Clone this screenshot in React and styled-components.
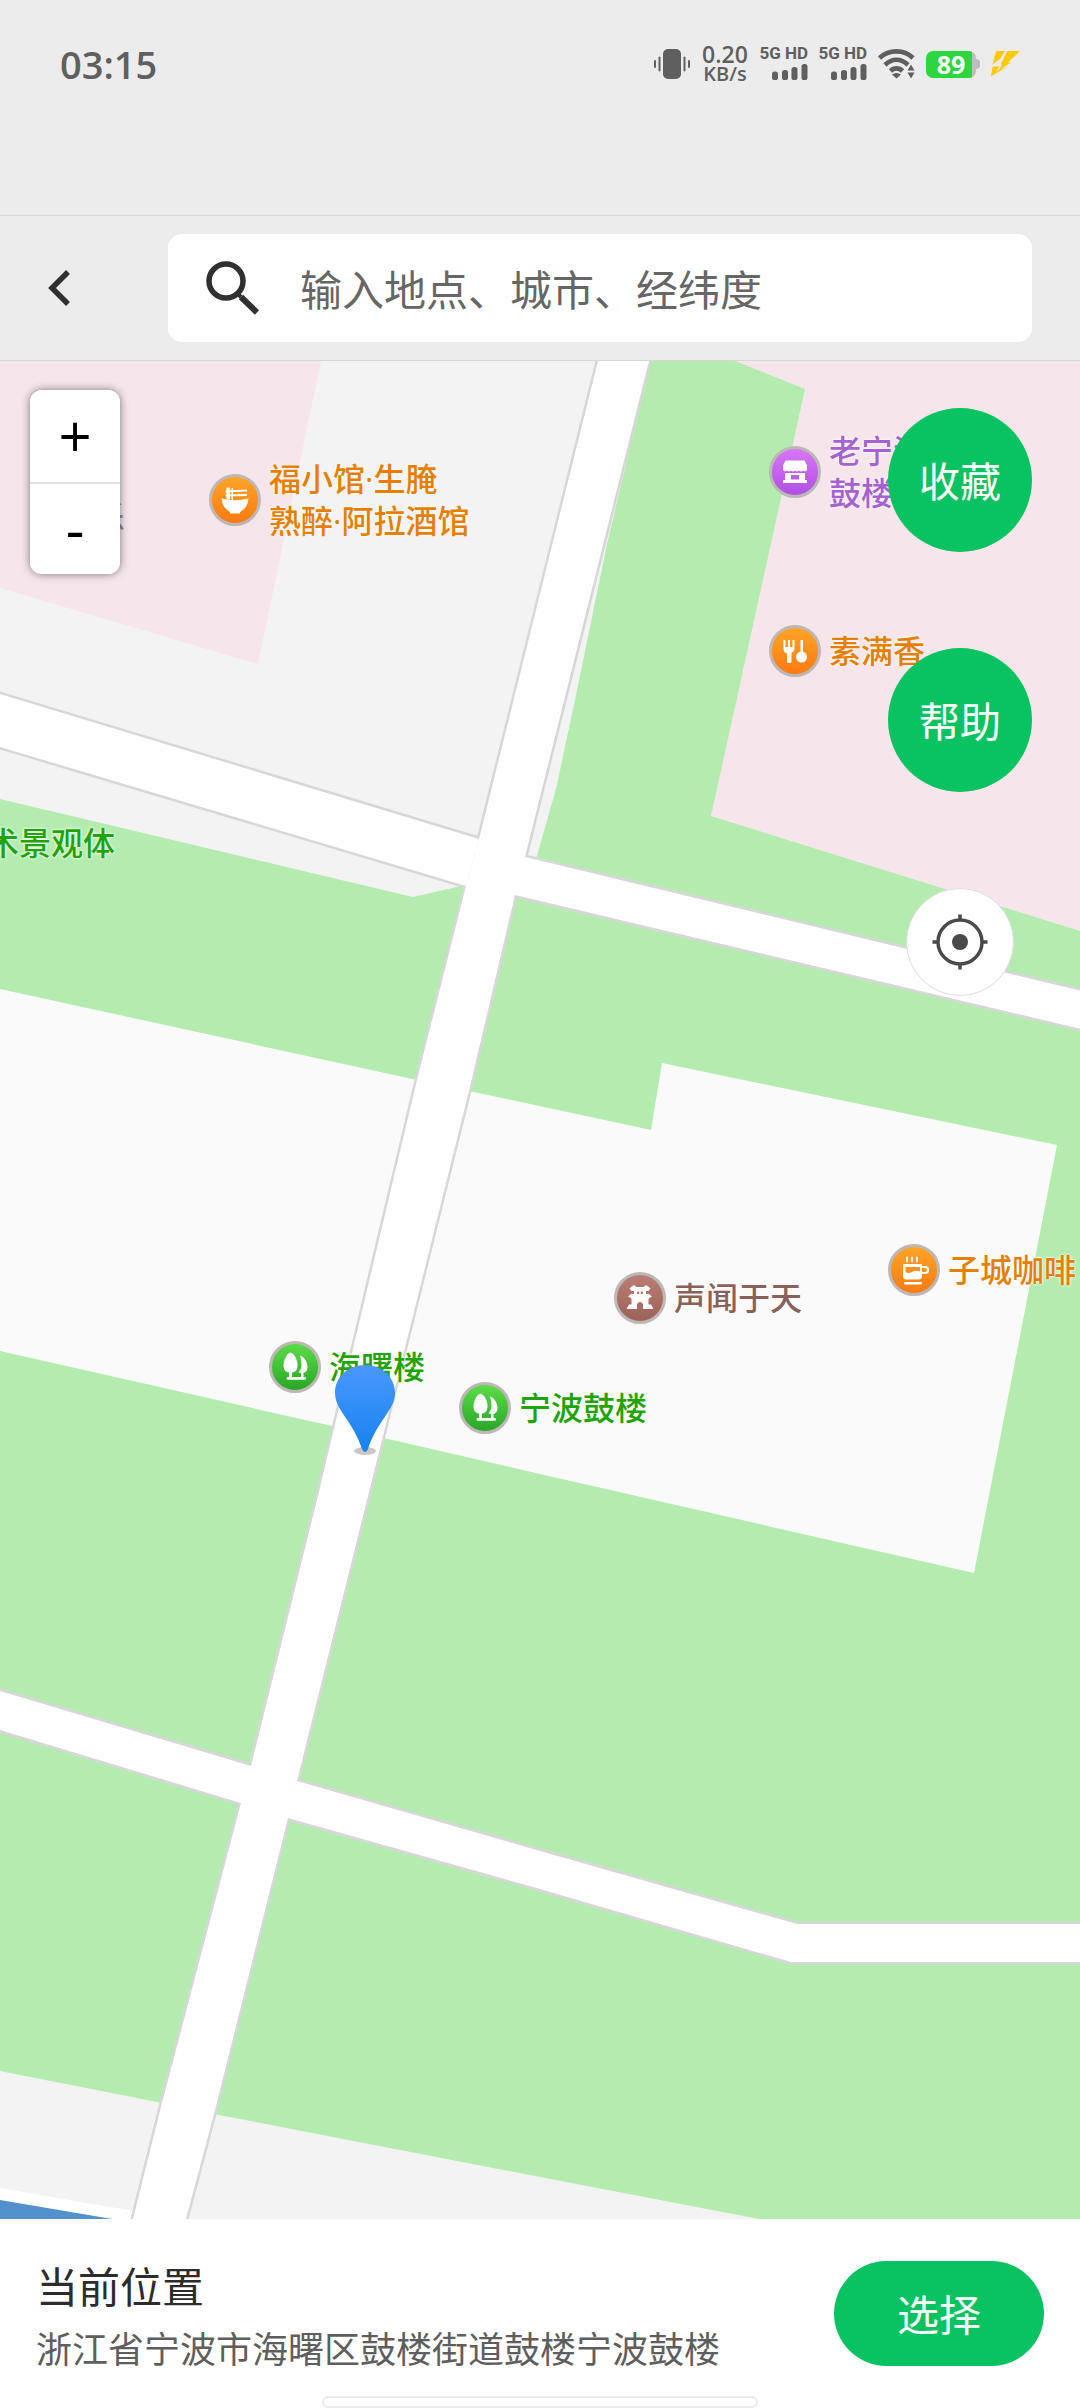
import React from "react";
import styled, { createGlobalStyle } from "styled-components";

const GlobalStyle = createGlobalStyle`
  *, *::before, *::after { box-sizing: border-box; }
  body {
    margin: 0;
    background: #ffffff;
    font-family: "Noto Sans CJK SC", "Noto Sans", sans-serif;
    color: #333333;
  }
  button, input { font: inherit; margin: 0; }
`;

const Screen = styled.div`
  display: flex;
  flex-direction: column;
  min-height: 100vh;
`;

/* ---------- Status bar ---------- */

const StatusBar = styled.header`
  height: 216px;
  background: #ececec;
  border-bottom: 1px solid #dcdcdc;
`;

const StatusRow = styled.div`
  display: flex;
  align-items: center;
  justify-content: space-between;
  height: 128px;
  padding: 0 60px;
  color: #5f5f5f;
`;

const Clock = styled.time`
  font: 600 38px/48px "Open Sans", "Noto Sans", sans-serif;
`;

const StatusIcons = styled.div`
  display: flex;
  align-items: center;
  gap: 11px;
`;

const NetSpeed = styled.div`
  display: flex;
  flex-direction: column;
  align-items: center;
  width: 48px;
  font: 600 23px/19px "Open Sans", "Noto Sans", sans-serif;
`;

const NetUnit = styled.span`
  font-size: 20px;
`;

const Signal = styled.div`
  display: flex;
  flex-direction: column;
  align-items: flex-end;
  gap: 4px;
  width: 48px;
  font: 700 17px/14px Roboto, sans-serif;
  white-space: nowrap;
`;

const Battery = styled.div`
  display: flex;
  align-items: center;
  width: 54px;
  &::after {
    content: "";
    width: 4px;
    height: 10px;
    border-radius: 0 4px 4px 0;
    background: #bdbdbd;
  }
`;

const BatteryCell = styled.div`
  flex: 1;
  height: 27px;
  border-radius: 7px;
  background: linear-gradient(to right, #2bd63f 92%, #bdbdbd 92%);
  color: #ffffff;
  font: 700 25px/27px "Open Sans", "Noto Sans", sans-serif;
  text-align: center;
`;

/* ---------- Search bar ---------- */

const NavBar = styled.nav`
  display: flex;
  align-items: center;
  padding: 18px 48px 18px 0;
  background: #ececec;
  border-bottom: 1px solid #d6d6d6;
`;

const BackButton = styled.button`
  display: flex;
  align-items: center;
  width: 168px;
  height: 108px;
  padding: 0 0 0 48px;
  border: 0;
  background: none;
`;

const SearchBox = styled.label`
  display: flex;
  align-items: center;
  flex: 1;
  gap: 40px;
  height: 108px;
  padding: 0 36px;
  border-radius: 14px;
  background: #ffffff;
`;

const SearchInput = styled.input`
  flex: 1;
  min-width: 0;
  padding: 0;
  border: 0;
  outline: 0;
  background: none;
  font-size: 42px;
  line-height: 60px;
  color: #333333;
  &::placeholder { color: #666666; opacity: 1; }
`;

/* ---------- Map ---------- */

const MapArea = styled.main`
  position: relative;
  flex: 1;
  overflow: hidden;
  background: #f3f3f3;
`;

const MapCanvas = styled.svg`
  position: absolute;
  inset: 0;
  width: 100%;
  height: 100%;
`;

const Poi = styled.div`
  position: absolute;
  left: ${(p) => p.$x}px;
  top: ${(p) => p.$y}px;
  display: flex;
  align-items: center;
  gap: 8px;
  transform: translate(-26px, -50%);
  color: ${(p) => p.$color};
  font: 500 32px/42px "Open Sans", "Noto Sans CJK SC", sans-serif;
  white-space: pre;
  text-shadow: 0 0 2px #fff, 0 0 3px #fff;
`;

const PoiBadge = styled.span`
  display: flex;
  width: 52px;
  height: 52px;
  border: 3px solid #bdb8b6;
  border-radius: 50%;
  background: linear-gradient(${(p) => p.$from}, ${(p) => p.$to});
  svg { width: 46px; height: 46px; }
`;

const Pin = styled.svg`
  position: absolute;
  left: 335px;
  top: 1004px;
  width: 60px;
  height: 92px;
`;

const ZoomControl = styled.div`
  position: absolute;
  left: 30px;
  top: 29px;
  display: flex;
  flex-direction: column;
  width: 90px;
  border-radius: 12px;
  overflow: hidden;
  background: #ffffff;
  box-shadow: 0 0 9px rgba(0, 0, 0, 0.5);
`;

const ZoomButton = styled.button`
  height: 92px;
  padding: 0;
  border: 0;
  background: #ffffff;
  color: #000000;
  font: 500 58px/90px "Open Sans", "Noto Sans", sans-serif;
  & + & { border-top: 2px solid #e2e2e2; }
`;

const FloatingActions = styled.div`
  position: absolute;
  top: 47px;
  right: 48px;
  display: flex;
  flex-direction: column;
  align-items: center;
  gap: 96px;
`;

const RoundButton = styled.button`
  width: 144px;
  height: 144px;
  padding: 0 0 2px;
  border: 0;
  border-radius: 50%;
  background: #09c261;
  color: #ffffff;
  font-size: 41px;
  line-height: 60px;
`;

const LocateButton = styled.button`
  display: flex;
  align-items: center;
  justify-content: center;
  width: 108px;
  height: 108px;
  padding: 0;
  border: 1px solid #dddddd;
  border-radius: 50%;
  background: #ffffff;
`;

/* ---------- Bottom sheet ---------- */

const BottomSheet = styled.footer`
  display: flex;
  flex-direction: column;
  gap: 17px;
  padding-top: 36px;
  background: #ffffff;
`;

const SheetRow = styled.div`
  display: flex;
  align-items: flex-start;
  justify-content: space-between;
  padding: 0 36px;
`;

const Place = styled.section`
  display: flex;
  flex-direction: column;
`;

const PlaceTitle = styled.h1`
  margin: 0;
  font-size: 42px;
  line-height: 60px;
  font-weight: 400;
  color: #2c2c2c;
`;

const PlaceAddress = styled.p`
  margin: 0;
  font-size: 36px;
  line-height: 64px;
  color: #5e5e5e;
`;

const SelectButton = styled.button`
  width: 210px;
  height: 105px;
  margin-top: 6px;
  padding: 0 0 2px;
  border: 0;
  border-radius: 53px;
  background: #09c261;
  color: #ffffff;
  font-size: 42px;
  line-height: 60px;
`;

const HomeIndicator = styled.div`
  align-self: center;
  width: 436px;
  height: 12px;
  border: 2px solid #ebebeb;
  border-radius: 6px;
  background: #ffffff;
`;

/* ---------- Drawings ---------- */

const VibrateIcon = () => (
  <svg width="36" height="30" viewBox="0 0 36 30" fill="#5f5f5f" aria-hidden="true">
    <rect x="9" y="0" width="18" height="30" rx="5" />
    <rect x="4.5" y="7.5" width="2" height="15" rx="1" />
    <rect x="0" y="11" width="2" height="8" rx="1" />
    <rect x="29.5" y="7.5" width="2" height="15" rx="1" />
    <rect x="34" y="11" width="2" height="8" rx="1" />
  </svg>
);

const SignalBars = () => (
  <svg width="36" height="18" viewBox="0 0 36 18" fill="#5f5f5f" aria-hidden="true">
    <rect x="0" y="7.5" width="6" height="8.5" rx="2.6" />
    <rect x="10" y="6" width="6" height="10" rx="2.6" />
    <rect x="19.5" y="3" width="6" height="13" rx="2.6" />
    <rect x="29.5" y="0" width="6" height="16" rx="2.6" />
  </svg>
);

const WifiIcon = () => (
  <svg width="37" height="30" viewBox="0 0 37 30" fill="none" stroke="#5f5f5f" strokeWidth="4.6" aria-hidden="true">
    <path d="M1.5 9C11 .2 26 .2 35 9" />
    <path d="M7 16C14 9 23 9 30 16" />
    <path d="M12.500 22C16 18.500 21 18.500 24.500 22" />
    <path d="M14 25.500q4.500-3 9 0l-4.500 4z" fill="#5f5f5f" stroke="none" />
    <path d="M29.500 21.500l3.500-6 3.500 6zM29.500 23.500l3.500 6 3.500-6z" fill="#5f5f5f" stroke="none" />
  </svg>
);

const BoltIcon = () => (
  <svg width="29" height="26" viewBox="0 0 29 26" fill="#ffc90a" aria-hidden="true">
    <path d="M5 0H14L9 8 1.500 13.500z" />
    <path d="M16.500 0H29L17 11.500H20L7.500 19.500 11 13.500H9.500z" />
    <path d="M1.500 15.500H8.500L5 20 16.500 15.500 0 25.500z" />
  </svg>
);

const BackIcon = () => (
  <svg width="22" height="36" viewBox="0 0 22 36" fill="none" stroke="#303030" strokeWidth="5.500" aria-hidden="true">
    <path d="M20 2L4 18l16 16" />
  </svg>
);

const SearchIcon = () => (
  <svg width="56" height="56" viewBox="0 0 56 56" fill="none" stroke="#303030" aria-hidden="true">
    <circle cx="22" cy="21" r="17" strokeWidth="5.500" />
    <path d="M34 34l3 3" strokeWidth="4" />
    <path d="M37 37l16 15.500" strokeWidth="6" />
  </svg>
);

const LocateIcon = () => (
  <svg width="56" height="56" viewBox="0 0 56 56" fill="none" stroke="#4a4a4a" aria-hidden="true">
    <circle cx="28" cy="28" r="22" strokeWidth="3.500" />
    <circle cx="28" cy="28" r="8" fill="#4a4a4a" stroke="none" />
    <path d="M28 .5v6M28 49.500v6M.5 28h6M49.500 28h6" strokeWidth="3.500" />
  </svg>
);

/* Glyphs sit in a 46 x 46 box centred on 0,0 */
const glyphs = {
  noodles: (
    <>
      <path d="M-13.500-1.500Q0 2 13.500-1.500Q12.500 8 5 12V13.500H-5V12Q-12.500 8-13.500-1.500Z" />
      <path d="M-8.500-12.500h3.500v12h-3.500zM-3.500-12h1.500v12h-1.500z" />
      <path d="M-9.500-9.500L12-10.500v2L-9.500-7.500zM-9.500-5.500L12-6v2L-9.500-3.500z" />
    </>
  ),
  store: (
    <>
      <path d="M-9.500-11.500h19l2.500 5v4.500q-2 2.500-4 .5-2 2-4 0-2 2-4 0-2 2-4 0-2 2-4 0-2 2-4-.5v-4.500z" />
      <path fillRule="evenodd" d="M-10 1H10V8H12V11H-12V8H-10ZM-4 3V7.500H4V3Z" />
    </>
  ),
  dining: (
    <>
      <path d="M-11.500-11h2v7h2.500v-7h2v7h2.500v-7h2v8q0 4-3 4.500v9q0 1.500-1.800 1.500T-8 11.500v-9q-3.500-1-3.500-4.500z" />
      <path d="M5.500-11h2.500v12.500h-2.500z" />
      <circle cx="6.500" cy="6" r="5.500" />
    </>
  ),
  tree: (
    <>
      <path d="M-4.500-14.500C0-13 3-6 2.500-1Q2 5-3 5.500V10H-6V5.500Q-11 5-11.500-1C-11.500-6-9-13-4.500-14.500Z" />
      <path d="M5-11.500C10-10 12.500-4 12.500 0Q12.500 5 8.500 6V10H6V6Q4.500 6 3.500 5 6.500 2 6.500-2.500 6.500-7 5-11.500Z" />
      <rect x="-8.500" y="10" width="19.500" height="2.800" rx="1.400" />
    </>
  ),
  pagoda: (
    <>
      <path d="M-10.500-9.500L-7-12.500H-4.500V-11H4.500V-12.500H7L10.500-9.500 8.500-7H6V-4H9L12-1.500 8.500.5V6.500H11L13.500 11H-13.500L-11 6.500H-8.500V.5L-12-1.500-9-4H-6V-7H-8.500Z" />
      <path d="M-3 11V6Q0 2 3 6V11ZM-2.800-6.500h2v2.500h-2zM.8-6.500h2v2.500h-2z" fill="#a96c61" />
    </>
  ),
  coffee: (
    <>
      <path fillRule="evenodd" d="M-11-6H8V6Q8 9.500 4.500 9.500H-7.500Q-11 9.500-11 6ZM-8.500-3V2Q-5 4-2 2T6 1.500V-3Z" />
      <path d="M8-3h3q3 0 3 3t-3 3h-3" fill="none" stroke="#fff" strokeWidth="2.200" />
      <rect x="-10" y="12" width="18" height="2.500" rx="1.200" />
      <path d="M-7-12.500v4M-2-12.500v4M3-12.500v4" stroke="#fff" strokeWidth="1.800" strokeLinecap="round" />
    </>
  ),
};

const orange = { from: "#ffa526", to: "#fb7a12", text: "#e57f00" };
const green = { from: "#5bdc48", to: "#2aa628", text: "#1fa305" };
const purple = { from: "#d777f5", to: "#b04fe4", text: "#a562d0" };
const brown = { from: "#b97e73", to: "#9d6257", text: "#88625a" };

const pois = [
  { x: 235, y: 139, icon: "noodles", tone: orange, name: "福小馆·生腌\n熟醉·阿拉酒馆" },
  { x: 795, y: 111, icon: "store", tone: purple, name: "老宁波特产市\n鼓楼店" },
  { x: 795, y: 290, icon: "dining", tone: orange, name: "素满香" },
  { x: 640, y: 937, icon: "pagoda", tone: brown, name: "声闻于天" },
  { x: 914, y: 909, icon: "coffee", tone: orange, name: "子城咖啡" },
  { x: 295, y: 1006, icon: "tree", tone: green, name: "海曙楼" },
  { x: 485, y: 1047, icon: "tree", tone: green, name: "宁波鼓楼" },
  { x: 13, y: 482, tone: green, name: "术景观体" },
  { x: 119, y: 156, tone: { text: "#8d8aa6" }, name: "乐" },
];

const roads = [
  "-10,330 479,478 466,525 -10,383",
  "500,489 525,496 1090,632 1090,670 515,534 490,528",
  "-10,1327 251,1405 297,1420 540,1490 797,1563 1090,1563 1090,1601 791,1601 540,1528 288,1457 241,1442 -10,1366",
  "601,-12 479,478 466,525 417,719 317,1139 251,1405 241,1442 162,1742 133,1858 133,1870 183,1870 186,1858 214,1753 288,1457 297,1420 367,1139 469,730 515,534 525,496 652,-12",
];

const MapDrawing = () => (
  <MapCanvas viewBox="0 0 1080 1858" preserveAspectRatio="xMidYMid slice" aria-hidden="true">
    <rect width="1080" height="1858" fill="#f3f3f3" />
    <g fill="#b4ecaf">
      <path d="M0 438L413 536 461 525H500L536 498 556 428 576 334 607 183 650 0H1080V1858H759L540 1816 214 1753 162 1742 0 1710Z" />
    </g>
    <g fill="#f6e6eb">
      <path d="M0 0H321L258 303 0 227Z" />
      <path d="M735 0L805 28 711 455 1080 570V0Z" />
    </g>
    <path fill="#fafafa" d="M0 628L417 719 469 730 651 769 662 702 1057 784 974 1212 540 1113 384 1077 332 1065 0 990Z" />
    <path fill="#ffffff" d="M0 1827L134 1850 150 1858H0Z" />
    <path fill="#5390cc" d="M0 1839L112 1858H0Z" />
    <g fill="none" stroke="#d8d6d8" strokeWidth="5" strokeLinejoin="round">
      {roads.map((r) => <polygon key={r} points={r} />)}
    </g>
    <g fill="#ffffff">
      {roads.map((r) => <polygon key={r} points={r} />)}
    </g>
  </MapCanvas>
);

export default function App() {
  return (
    <Screen>
      <GlobalStyle />
      <StatusBar>
        <StatusRow>
          <Clock>03:15</Clock>
          <StatusIcons>
            <VibrateIcon />
            <NetSpeed>
              <span>0.20</span>
              <NetUnit>KB/s</NetUnit>
            </NetSpeed>
            <Signal>5G HD<SignalBars /></Signal>
            <Signal>5G HD<SignalBars /></Signal>
            <WifiIcon />
            <Battery><BatteryCell>89</BatteryCell></Battery>
            <BoltIcon />
          </StatusIcons>
        </StatusRow>
      </StatusBar>

      <NavBar>
        <BackButton type="button" aria-label="返回"><BackIcon /></BackButton>
        <SearchBox>
          <SearchIcon />
          <SearchInput type="text" aria-label="搜索" placeholder="输入地点、城市、经纬度" />
        </SearchBox>
      </NavBar>

      <MapArea>
        <MapDrawing />
        {pois.map((p) => (
          <Poi key={p.name} $x={p.x} $y={p.y} $color={p.tone.text}>
            {p.icon && (
              <PoiBadge $from={p.tone.from} $to={p.tone.to}>
                <svg viewBox="-23 -23 46 46" fill="#ffffff" aria-hidden="true">{glyphs[p.icon]}</svg>
              </PoiBadge>
            )}
            <span>{p.name}</span>
          </Poi>
        ))}
        <Pin viewBox="0 0 60 92" aria-hidden="true">
          <defs>
            <linearGradient id="pinFill" x1="0" y1="0" x2="0" y2="1">
              <stop offset="0" stopColor="#4a98ff" />
              <stop offset="1" stopColor="#1683ee" />
            </linearGradient>
          </defs>
          <ellipse cx="30" cy="86" rx="11" ry="4" fill="#cdc6c6" />
          <path d="M30 0C47 0 60 12 60 28 60 45 42 56 33 84Q32 87 30 87T27 84C18 56 0 45 0 28 0 12 13 0 30 0Z" fill="url(#pinFill)" />
        </Pin>
        <ZoomControl>
          <ZoomButton type="button" aria-label="放大">+</ZoomButton>
          <ZoomButton type="button" aria-label="缩小">-</ZoomButton>
        </ZoomControl>
        <FloatingActions>
          <RoundButton type="button">收藏</RoundButton>
          <RoundButton type="button">帮助</RoundButton>
          <LocateButton type="button" aria-label="定位"><LocateIcon /></LocateButton>
        </FloatingActions>
      </MapArea>

      <BottomSheet>
        <SheetRow>
          <Place>
            <PlaceTitle>当前位置</PlaceTitle>
            <PlaceAddress>浙江省宁波市海曙区鼓楼街道鼓楼宁波鼓楼</PlaceAddress>
          </Place>
          <SelectButton type="button">选择</SelectButton>
        </SheetRow>
        <HomeIndicator />
      </BottomSheet>
    </Screen>
  );
}
